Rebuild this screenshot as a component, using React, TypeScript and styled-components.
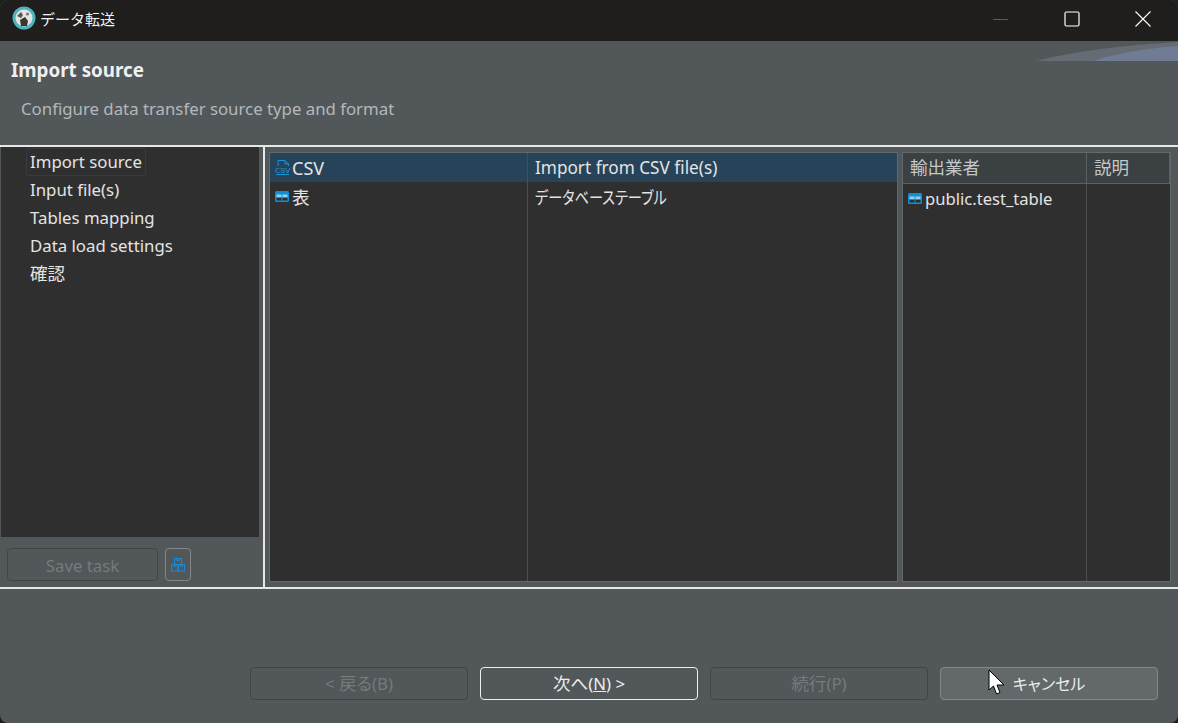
import React from 'react';
import styled, {createGlobalStyle} from 'styled-components';

const GlobalStyle = createGlobalStyle`
    html, body {
        margin: 0;
        padding: 0;
        background: #1f1e1d;
    }
`;

const Jp = styled.span`
    font-family: "Noto Sans CJK JP", sans-serif;
    font-size: 17.5px;
    line-height: 1;
    font-feature-settings: "palt";
`;

const NarrowKana = styled(Jp)`
    display: inline-block;
    transform: scaleX(0.81);
    transform-origin: left center;
`;

const CsvName = styled.span`
    font-size: 18px;
`;

const sources = [
    {name: <CsvName>CSV</CsvName>, description: 'Import from CSV file(s)', icon: 'csv', selected: true},
    {name: <Jp>表</Jp>, description: <NarrowKana>データベーステーブル</NarrowKana>, icon: 'table', selected: false},
];

const steps = [
    'Import source',
    'Input file(s)',
    'Tables mapping',
    'Data load settings',
    <Jp>確認</Jp>,
];

const AppIcon = () => (
    <svg width="24" height="24" viewBox="0 0 24 24">
        <circle cx="12" cy="12" r="11.5" fill="#4fb3ba"/>
        <circle cx="12" cy="12" r="8.5" fill="#e4e4e2"/>
        <path d="M5 10 L9 6 L11 9 L9 12 Z" fill="#555"/>
        <path d="M8 14 L13 11 L16 15 L15 20 L9 20 Z" fill="#3d3633"/>
        <circle cx="15.5" cy="8" r="1.6" fill="#777"/>
    </svg>
);

const TableIcon = () => (
    <svg width="14" height="12" viewBox="0 0 14 12">
        <rect x="0" y="0" width="14" height="11" rx="1.5" fill="#0e8fd6"/>
        <rect x="1.5" y="3.5" width="5" height="2.5" fill="#8fd0f2"/>
        <rect x="7.5" y="3.5" width="5" height="2.5" fill="#8fd0f2"/>
        <rect x="1.5" y="7" width="5" height="2.5" fill="#2f2f2f"/>
        <rect x="7.5" y="7" width="5" height="2.5" fill="#2f2f2f"/>
    </svg>
);

const CsvIcon = () => (
    <svg width="16" height="16" viewBox="0 0 16 16" fill="none" stroke="#1a93d8" strokeWidth="1">
        <path d="M3 6 V.5 H10 L13.5 4 V6"/>
        <path d="M10 .5 V4 H13.5"/>
        <path d="M1 14.5 H14"/>
        <text x="0" y="12.5" fontFamily="Liberation Mono" fontSize="7.5" fill="#1a93d8" stroke="none" textLength="15.5" lengthAdjust="spacingAndGlyphs">CSV</text>
    </svg>
);

const TaskIcon = () => (
    <svg width="14" height="14" viewBox="0 0 14 14" fill="none" stroke="#1a8ad4" strokeWidth="1">
        <rect x="3.5" y="0.5" width="7" height="6"/>
        <path d="M6 .5 V2.5 H8 V.5"/>
        <rect x="0.5" y="6.5" width="6.5" height="6.5"/>
        <rect x="7" y="6.5" width="6.5" height="6.5"/>
        <path d="M3 6.5 V8.5 H5 V6.5"/>
        <path d="M9.5 6.5 V8.5 H11.5 V6.5"/>
    </svg>
);

const App: React.FC = () => {
    return (
        <Window>
            <GlobalStyle/>
            <TitleBar>
                <TitleLeft>
                    <AppIcon/>
                    <TitleText>データ転送</TitleText>
                </TitleLeft>
                <WindowButtons>
                    <WindowButton>
                        <svg width="16" height="16" viewBox="0 0 16 16">
                            <path d="M0 8.5 H15" stroke="#5c5b5a" strokeWidth="1"/>
                        </svg>
                    </WindowButton>
                    <WindowButton>
                        <svg width="16" height="16" viewBox="0 0 16 16" fill="none">
                            <rect x="1" y="1" width="14" height="14" rx="1.5" stroke="#fff" strokeWidth="1.2"/>
                        </svg>
                    </WindowButton>
                    <WindowButton>
                        <svg width="16" height="16" viewBox="0 0 16 16" fill="none">
                            <path d="M.5 .5 L15.5 15.5 M15.5 .5 L.5 15.5" stroke="#fff" strokeWidth="1.1"/>
                        </svg>
                    </WindowButton>
                </WindowButtons>
            </TitleBar>

            <Banner>
                <BannerTitle>Import source</BannerTitle>
                <BannerSubtitle>Configure data transfer source type and format</BannerSubtitle>
                <BannerWedge width="142" height="20" viewBox="0 0 142 20">
                    <path d="M0 20 Q55 6 142 1 V20 Z" fill="#656c74"/>
                    <path d="M57 20 Q90 9 142 5 V20 Z" fill="#6f7c93"/>
                </BannerWedge>
            </Banner>

            <Body>
                <LeftColumn>
                    <StepList>
                        {steps.map((step, index) => (
                            <Step key={index} $active={index === 0}>{step}</Step>
                        ))}
                    </StepList>
                    <TaskBar>
                        <SaveTaskButton disabled>Save task</SaveTaskButton>
                        <TaskIconButton><TaskIcon/></TaskIconButton>
                    </TaskBar>
                </LeftColumn>

                <RightColumn>
                    <SourceTable>
                        <NameColumn>
                            {sources.map(source => (
                                <Row key={source.icon} $selected={source.selected}>
                                    <RowIcon>{source.icon === 'csv' ? <CsvIcon/> : <TableIcon/>}</RowIcon>
                                    {source.name}
                                </Row>
                            ))}
                        </NameColumn>
                        <DescriptionColumn>
                            {sources.map(source => (
                                <DescriptionRow key={source.icon} $selected={source.selected}>
                                    {source.description}
                                </DescriptionRow>
                            ))}
                        </DescriptionColumn>
                    </SourceTable>
                    <ExportTable>
                        <HeaderRow>
                            <HeaderCell $width={184}><Jp>輸出業者</Jp></HeaderCell>
                            <HeaderCell><Jp>説明</Jp></HeaderCell>
                        </HeaderRow>
                        <ExportBody>
                            <ExportNameColumn>
                                <ExportRow>
                                    <RowIcon><TableIcon/></RowIcon>
                                    public.test_table
                                </ExportRow>
                            </ExportNameColumn>
                        </ExportBody>
                    </ExportTable>
                </RightColumn>
            </Body>

            <Footer>
                <FooterButton disabled>&lt; <Jp>戻る</Jp>(B)</FooterButton>
                <FooterButton $primary><Jp>次へ</Jp>(<u>N</u>) &gt;</FooterButton>
                <FooterButton disabled><Jp>続行</Jp>(P)</FooterButton>
                <FooterButton $hover><CancelLabel>キャンセル</CancelLabel></FooterButton>
            </Footer>

            <Cursor width="19" height="27" viewBox="0 0 19 27">
                <path d="M1 1 V21 L5.5 17 L8.5 25 L12 23.5 L9 16 L16 16 Z" fill="#fff" stroke="#000" strokeWidth="1"/>
            </Cursor>
        </Window>
    );
};

const Window = styled.div`
    position: relative;
    width: 1178px;
    height: 723px;
    display: flex;
    flex-direction: column;
    overflow: hidden;
    box-sizing: border-box;
    background: #52575a;
    font-family: "Noto Sans", "Noto Sans CJK JP", sans-serif;
    font-size: 16.8px;
    color: #e4e4e4;
    border-radius: 8px;
`;

const TitleBar = styled.div`
    flex: 0 0 41px;
    display: flex;
    justify-content: space-between;
    align-items: center;
    background: #1f1e1d;
    padding-left: 12px;
`;

const TitleLeft = styled.div`
    display: flex;
    align-items: center;
    gap: 4px;
    padding-bottom: 5px;
`;

const TitleText = styled.div`
    color: #f2f2f2;
    font-size: 15px;
`;

const WindowButtons = styled.div`
    display: flex;
`;

const WindowButton = styled.div`
    width: 71px;
    height: 41px;
    display: flex;
    align-items: center;
    justify-content: center;
    padding-bottom: 4px;
    box-sizing: border-box;
`;

const Banner = styled.div`
    position: relative;
    flex: 0 0 106px;
    box-sizing: border-box;
    border-bottom: 2px solid #e6e8e8;
    padding: 17px 0 0 11px;
`;

const BannerTitle = styled.div`
    font-size: 18.8px;
    font-weight: 700;
    color: #f0f0f0;
    line-height: 24px;
`;

const BannerSubtitle = styled.div`
    margin: 16px 0 0 10px;
    line-height: 22px;
    color: #b4b8ba;
`;

const BannerWedge = styled.svg`
    position: absolute;
    top: 0;
    right: 0;
`;

const Body = styled.div`
    flex: 0 0 442px;
    display: flex;
    box-sizing: border-box;
    border-bottom: 2px solid #e6e8e8;
`;

const LeftColumn = styled.div`
    flex: 0 0 262px;
    margin-left: 1px;
    display: flex;
    flex-direction: column;
    box-sizing: border-box;
`;

const StepList = styled.div`
    flex: 1;
    width: 258px;
    background: #2f2f2f;
    padding: 1px 0 0 25px;
    box-sizing: border-box;
`;

const Step = styled.div<{ $active: boolean }>`
    width: fit-content;
    height: 26px;
    padding: 0 3px;
    line-height: 26px;
    border-radius: 2px;
    border: 1px solid ${p => (p.$active ? '#3a3a3a' : 'transparent')};
`;

const TaskBar = styled.div`
    flex: 0 0 50px;
    display: flex;
    align-items: flex-start;
    gap: 7px;
    padding: 11px 0 0 6px;
    box-sizing: border-box;
`;

const SaveTaskButton = styled.button`
    width: 151px;
    height: 33px;
    background: transparent;
    border: 1px solid #424547;
    border-radius: 4px;
    color: #757a7c;
    font: inherit;
    padding: 1px 0 0;
`;

const TaskIconButton = styled.div`
    width: 26px;
    height: 33px;
    display: flex;
    align-items: center;
    justify-content: center;
    border: 1px solid #83878a;
    border-radius: 4px;
    box-sizing: border-box;
`;

const RightColumn = styled.div`
    flex: 1;
    display: flex;
    gap: 4px;
    border-left: 2px solid #e6e8e8;
    padding: 5px 7px 5px 4px;
    box-sizing: border-box;
`;

const SourceTable = styled.div`
    flex: 0 0 629px;
    display: flex;
    background: #2f2f2f;
    border: 1px solid #63686b;
    box-sizing: border-box;
`;

const NameColumn = styled.div`
    flex: 0 0 258px;
    box-sizing: border-box;
    border-right: 1px solid #40505c;
`;

const DescriptionColumn = styled.div`
    flex: 1;
    font-size: 17.2px;
`;

const Row = styled.div<{ $selected: boolean }>`
    height: 29px;
    display: flex;
    align-items: center;
    gap: 1px;
    padding-left: 5px;
    background: ${p => (p.$selected ? '#27435a' : 'transparent')};
`;

const DescriptionRow = styled.div<{ $selected: boolean }>`
    height: 29px;
    display: flex;
    align-items: center;
    padding-left: 7px;
    background: ${p => (p.$selected ? '#27435a' : 'transparent')};
`;

const RowIcon = styled.span`
    display: inline-flex;
    width: 16px;
    justify-content: flex-start;
`;

const ExportTable = styled.div`
    flex: 1;
    display: flex;
    flex-direction: column;
    background: #2f2f2f;
    border: 1px solid #63686b;
    box-sizing: border-box;
`;

const HeaderRow = styled.div`
    flex: 0 0 30px;
    display: flex;
    background: #3b4043;
    border-bottom: 1px solid #5a5f62;
`;

const HeaderCell = styled.div<{ $width?: number }>`
    ${p => (p.$width ? `flex: 0 0 ${p.$width}px;` : 'flex: 1;')}
    box-sizing: border-box;
    padding-left: 7px;
    line-height: 30px;
    color: #c4c8ca;
    border-right: 1px solid #5a5f62;
`;

const ExportBody = styled.div`
    flex: 1;
    display: flex;
`;

const ExportNameColumn = styled.div`
    flex: 0 0 184px;
    box-sizing: border-box;
    border-right: 1px solid #4a4f52;
`;

const ExportRow = styled.div`
    height: 29px;
    display: flex;
    align-items: center;
    gap: 1px;
    padding-left: 5px;
    font-size: 16.6px;
`;

const Footer = styled.div`
    flex: 1;
    display: flex;
    align-items: flex-start;
    gap: 12px;
    padding: 78px 0 0 250px;
`;

const FooterButton = styled.button<{ $primary?: boolean; $hover?: boolean }>`
    width: 218px;
    height: 33px;
    padding: 0;
    border-radius: 4px;
    font: inherit;
    background: ${p => (p.$hover ? '#63686b' : 'transparent')};
    color: ${p => (p.disabled ? '#757a7c' : '#ececec')};
    border: 1px solid ${p => (p.$primary ? '#eeeeee' : p.$hover ? '#83878a' : '#424547')};
`;

const CancelLabel = styled(Jp)`
    font-size: 16px;
`;

const Cursor = styled.svg`
    position: absolute;
    left: 988px;
    top: 669px;
`;

export default App;
